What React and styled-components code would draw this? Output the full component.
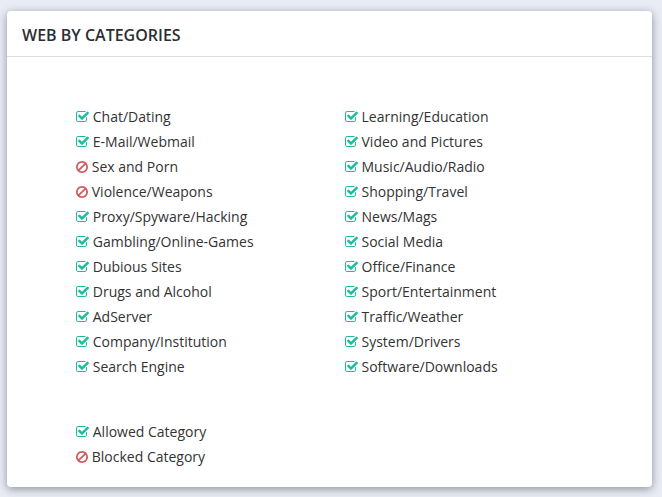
import React from 'react'
import styled, {createGlobalStyle} from 'styled-components'

const GlobalStyle = createGlobalStyle`
    * {
        box-sizing: border-box;
    }

    body {
        margin: 0;
        background: #e9ecf4;
        color: #333;
        font-family: 'Open Sans', 'Noto Sans', sans-serif;
        font-size: 14px;
        line-height: 25px;
    }
`

const Page = styled.main`
    padding: 11px 10px 10px 7px;
`

const Panel = styled.section`
    background: #fff;
    border-radius: 4px;
    box-shadow: 0 2px 8px rgba(50, 55, 70, 0.5);
`

const PanelHeader = styled.header`
    padding: 12px 15px 8px;
    border-bottom: 1px solid #ddd;
`

const PanelTitle = styled.h1`
    margin: 0;
    color: #2a2f33;
    font-size: 16px;
    font-weight: 600;
    line-height: 25px;
    text-transform: uppercase;
`

const PanelBody = styled.div`
    padding: 47px 0 18px;
`

const Columns = styled.div`
    display: grid;
    grid-template-columns: repeat(12, 1fr);
    margin-bottom: ${({$spaced}) => ($spaced ? '40px' : '0')};
`

const List = styled.ul`
    grid-column: ${({$start}) => $start} / span 5;
    margin: 0;
    padding: 0 15px;
    list-style: none;
`

const Item = styled.li`
    white-space: nowrap;
`

const Icon = styled.svg`
    display: inline-block;
    width: ${({$blocked}) => ($blocked ? '12px' : '13px')};
    height: 14px;
    margin-right: 4px;
    fill: ${({$blocked}) => ($blocked ? '#cf5b60' : '#1abc9c')};
    vertical-align: -2px;
`

const left = [
    {name: 'Chat/Dating'},
    {name: 'E-Mail/Webmail'},
    {name: 'Sex and Porn', blocked: true},
    {name: 'Violence/Weapons', blocked: true},
    {name: 'Proxy/Spyware/Hacking'},
    {name: 'Gambling/Online-Games'},
    {name: 'Dubious Sites'},
    {name: 'Drugs and Alcohol'},
    {name: 'AdServer'},
    {name: 'Company/Institution'},
    {name: 'Search Engine'},
]

const right = [
    {name: 'Learning/Education'},
    {name: 'Video and Pictures'},
    {name: 'Music/Audio/Radio'},
    {name: 'Shopping/Travel'},
    {name: 'News/Mags'},
    {name: 'Social Media'},
    {name: 'Office/Finance'},
    {name: 'Sport/Entertainment'},
    {name: 'Traffic/Weather'},
    {name: 'System/Drivers'},
    {name: 'Software/Downloads'},
]

const legend = [
    {name: 'Allowed Category'},
    {name: 'Blocked Category', blocked: true},
]

const AllowedIcon = () => (
    <Icon viewBox="64 0 1664 1792" aria-hidden="true">
        <path d="M1472 930v318q0 119-84.5 203.5t-203.5 84.5h-832q-119 0-203.5-84.5t-84.5-203.5v-832q0-119 84.5-203.5t203.5-84.5h832q63 0 117 25 15 7 18 23 3 17-9 29l-49 49q-10 10-23 10-3 0-9-2-23-6-45-6h-832q-66 0-113 47t-47 113v832q0 66 47 113t113 47h832q66 0 113-47t47-113v-254q0-13 9-22l64-64q10-10 23-10 6 0 12 3 20 8 20 29zm231-489l-814 814q-24 24-57 24t-57-24l-430-430q-24-24-24-57t24-57l110-110q24-24 57-24t57 24l263 263 647-647q24-24 57-24t57 24l110 110q24 24 24 57t-24 57z" />
    </Icon>
)

const BlockedIcon = () => (
    <Icon $blocked viewBox="128 0 1536 1792" aria-hidden="true">
        <path d="M1440 893q0-161-87-295l-754 753q137 89 297 89 111 0 211.5-43.5t173.5-116.5 116-174.5 43-212.5zm-999 299l755-754q-135-91-300-91-148 0-273 73t-198 199-73 274q0 162 89 299zm1223-299q0 157-61 300t-163.5 246-245 164-298.5 61-298.5-61-245-164-163.5-246-61-300 61-299.5 163.5-245.5 245-164 298.5-61 298.5 61 245 164 163.5 245.5 61 299.5z" />
    </Icon>
)

const CategoryList = ({items, start}) => (
    <List $start={start}>
        {items.map(({name, blocked}) => (
            <Item key={name}>
                {blocked ? <BlockedIcon/> : <AllowedIcon/>}
                {name}
            </Item>
        ))}
    </List>
)

const App = () => {
    return (
        <>
            <GlobalStyle/>
            <Page>
                <Panel>
                    <PanelHeader>
                        <PanelTitle>Web by Categories</PanelTitle>
                    </PanelHeader>
                    <PanelBody>
                        <Columns $spaced>
                            <CategoryList items={left} start={2}/>
                            <CategoryList items={right} start={7}/>
                        </Columns>
                        <Columns>
                            <CategoryList items={legend} start={2}/>
                        </Columns>
                    </PanelBody>
                </Panel>
            </Page>
        </>
    )
}

export default App
